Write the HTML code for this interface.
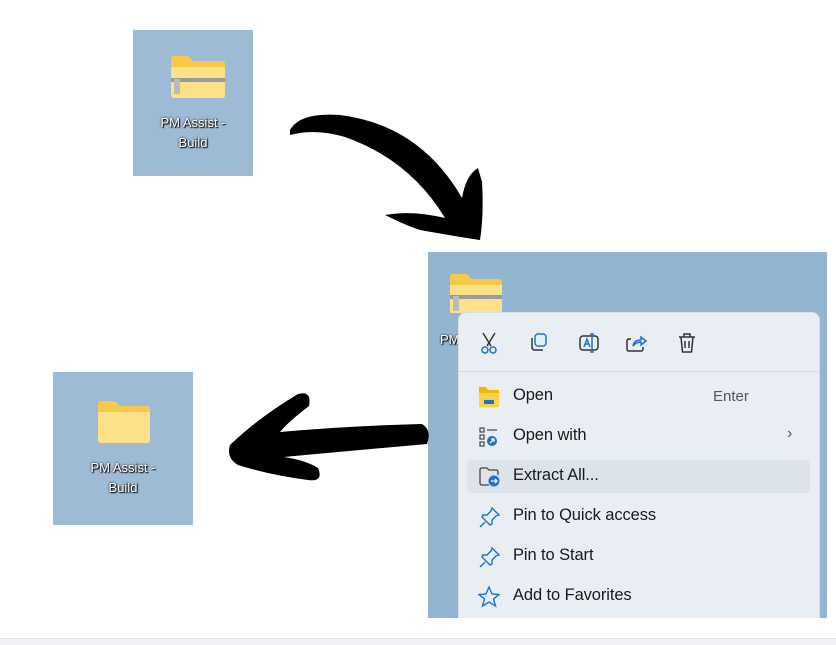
<!DOCTYPE html>
<html><head><style>
body{margin:0;width:836px;height:644px;background:#fff;position:relative;overflow:hidden;font-family:"Segoe UI","Liberation Sans",sans-serif}
.box{position:absolute;background:#9dbbd5}
.lbl{position:absolute;color:#fff;font-size:13px;text-align:center;line-height:20px;text-shadow:0 0 2px #000,1px 1px 1px #000}
.menu{position:absolute;left:30px;top:60px;width:360px;height:340px;background:#e8eef4;border-radius:8px;border:1px solid #d6dee6}
.item{position:absolute;left:54px;font-size:16.5px;color:#1a1a1a;letter-spacing:-0.1px}
.ic{position:absolute}
</style></head><body>
<div class="box" style="left:133px;top:30px;width:120px;height:146px"></div>
<svg class="ic" style="left:170px;top:55px" width="56" height="44" viewBox="0 0 56 44"><path d="M1 4q0-3 3-3h14l5 5h29q3 0 3 3v31q0 3-3 3H4q-3 0-3-3z" fill="#f7c948"/><path d="M1 12h54v28q0 3-3 3H4q-3 0-3-3z" fill="#fde08a"/><rect x="1" y="23" width="54" height="4" fill="#9a9a9a"/><rect x="4" y="24" width="6" height="15" fill="#bbb"/></svg>
<div class="lbl" style="left:133px;top:113px;width:120px">PM Assist -<br>Build</div>

<div class="box" style="left:53px;top:372px;width:140px;height:153px"></div>
<svg class="ic" style="left:97px;top:400px" width="54" height="44" viewBox="0 0 54 44"><path d="M1 4q0-3 3-3h14l5 5h27q3 0 3 3v31q0 3-3 3H4q-3 0-3-3z" fill="#f7c948"/><path d="M1 12h52v28q0 3-3 3H4q-3 0-3-3z" fill="#fde08a"/></svg>
<div class="lbl" style="left:53px;top:458px;width:140px">PM Assist -<br>Build</div>

<div class="box" style="left:428px;top:252px;width:399px;height:366px;background:#93b5d0;overflow:hidden">
<svg class="ic" style="left:21px;top:21px" width="54" height="40" viewBox="0 0 54 40"><path d="M1 4q0-3 3-3h14l5 5h27q3 0 3 3v31H1z" fill="#f7c948"/><path d="M1 12h52v28H1z" fill="#fde08a"/><rect x="1" y="22" width="52" height="4" fill="#9a9a9a"/><rect x="4" y="23" width="6" height="15" fill="#bbb"/></svg>
<div class="lbl" style="left:12px;top:78px">PM</div>
<div class="menu">
<div style="position:absolute;left:0;right:0;top:58px;height:1px;background:#d3dbe3"></div>
<div style="position:absolute;left:8px;top:147px;width:343px;height:33px;background:#dde3ea;border-radius:5px"></div>
<svg class="ic" style="left:20px;top:18px" width="240" height="24" viewBox="0 0 240 24" fill="none" stroke-width="1.5">
<g stroke="#333"><path d="M4 2l8 13M16 2l-8 13"/></g><g stroke="#1a73d0"><circle cx="6" cy="19" r="3"/><circle cx="14" cy="19" r="3"/></g>
<g stroke="#1a73d0"><rect x="56" y="3" width="11" height="12" rx="3"/></g><path d="M53 7v9q0 3 3 3h8" stroke="#333"/>
<rect x="101" y="5" width="18" height="14" rx="3" stroke="#333"/><path d="M105 16l3-8 3 8M106 13h4M113 3v18M111 3h4M111 21h4" stroke="#1a73d0"/>
<path d="M152 8h-2q-2 0-2 2v8q0 2 2 2h12q2 0 2-2v-2" stroke="#333"/><path d="M154 15q1-6 8-6V6l5 4-5 4v-3q-5 0-8 4z" stroke="#1a73d0"/>
<path d="M200 6h16M205 6V3h6v3M202 6l1.5 15h9l1.5-15M206 10v7M210 10v7" stroke="#333"/>
</svg>
<svg class="ic" style="left:20px;top:74px" width="20" height="20" viewBox="0 0 20 20"><path d="M0 0h7l2 3h11v16H0z" fill="#f4b400"/><rect x="0" y="6" width="20" height="14" fill="#fcd24a"/><rect x="5" y="13" width="10" height="4" fill="#1a73d0"/></svg>
<div class="item" style="top:73px">Open</div><div style="position:absolute;left:254px;top:75px;font-size:15px;color:#555">Enter</div>
<svg class="ic" style="left:20px;top:114px" width="20" height="20" viewBox="0 0 20 20" fill="none" stroke="#444" stroke-width="1.2"><rect x="1" y="1" width="4" height="4"/><rect x="1" y="8" width="4" height="4"/><rect x="1" y="15" width="4" height="4"/><path d="M8 3h10"/><circle cx="13" cy="14" r="5" fill="#1a73d0" stroke="none"/><path d="M11 16l4-4M12 12h3v3" stroke="#fff"/></svg>
<div class="item" style="top:113px">Open with</div><div style="position:absolute;left:328px;top:112px;font-size:16px;color:#555">›</div>
<svg class="ic" style="left:20px;top:154px" width="22" height="20" viewBox="0 0 22 20" fill="none" stroke="#444" stroke-width="1.3"><path d="M1 3q0-2 2-2h5l2 2h7q2 0 2 2v3M1 3v13q0 2 2 2h7"/><circle cx="15" cy="14" r="5.5" fill="#1a73d0" stroke="none"/><path d="M12 14h6M16 12l2 2-2 2" stroke="#fff"/></svg>
<div class="item" style="top:153px">Extract All...</div>
<svg class="ic" style="left:20px;top:193px" width="22" height="22" viewBox="0 0 22 22" fill="none" stroke="#1a73d0" stroke-width="1.4"><path d="M13 2l7 7-3 1-4 4 0 4-2 1-8-8 1-2h4l4-4z M6 16l-5 5"/></svg>
<div class="item" style="top:193px">Pin to Quick access</div>
<svg class="ic" style="left:20px;top:233px" width="22" height="22" viewBox="0 0 22 22" fill="none" stroke="#1a73d0" stroke-width="1.4"><path d="M13 2l7 7-3 1-4 4 0 4-2 1-8-8 1-2h4l4-4z M6 16l-5 5"/></svg>
<div class="item" style="top:233px">Pin to Start</div>
<svg class="ic" style="left:19px;top:273px" width="22" height="22" viewBox="0 0 22 22" fill="none" stroke="#1a73d0" stroke-width="1.4"><path d="M11 1l3 7 7 .5-5.5 4.5 2 7-6.5-4-6.5 4 2-7L1 8.5 8 8z"/></svg>
<div class="item" style="top:273px">Add to Favorites</div>
</div>
</div>
<div style="position:absolute;left:0;top:638px;width:836px;height:6px;background:#f0f2f5;border-top:1px solid #e2e5ea"></div>

<svg class="ic" style="left:0;top:0" width="836" height="644" viewBox="0 0 836 644">
<path d="M290 130 Q300 112 340 115 Q420 125 462 198 Q466 175 478 168 L482 182 Q484 215 480 240 Q465 238 420 230 Q405 225 385 215 Q412 210 445 218 Q410 160 345 137 Q315 128 290 135z" fill="#000"/>
<path d="M230 445 Q258 418 298 394 Q312 390 309 406 Q288 422 280 432 Q345 426 422 424 Q432 430 427 444 Q360 450 284 457 Q305 460 318 468 Q324 482 308 480 Q270 475 238 465 Q226 458 230 445z" fill="#000"/>
</svg>
</body></html>
